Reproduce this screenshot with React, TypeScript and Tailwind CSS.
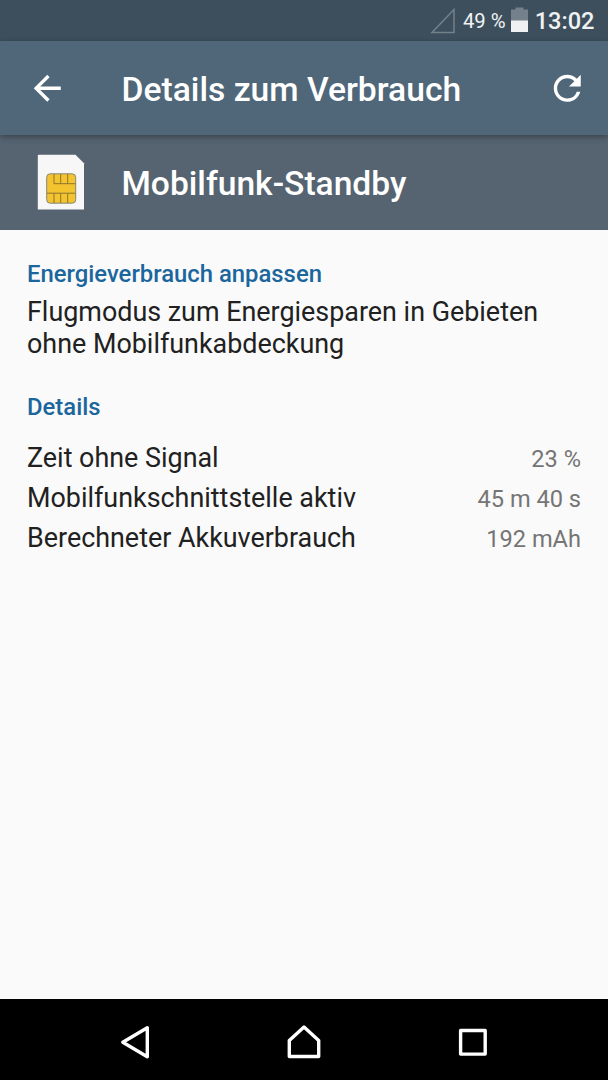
import type { ReactNode } from 'react';

const usageDetails = [
  { label: 'Zeit ohne Signal', value: '23 %' },
  { label: 'Mobilfunkschnittstelle aktiv', value: '45 m 40 s' },
  { label: 'Berechneter Akkuverbrauch', value: '192 mAh' },
];

const StatusBar = () => (
  <div className="flex h-[40.5px] items-center justify-end bg-[#3d4f5d] pr-[13.5px] text-[#f0f2f3]">
    <svg className="mt-[2px] mr-[8px] h-[26px] w-[26px]" viewBox="0 0 26 26" fill="none">
      <path d="M3 24.5H25V1.5Z" stroke="#74808a" strokeWidth="1.5" />
    </svg>
    <span className="pt-[2px] text-[20.3px] leading-none">49 %</span>
    <svg className="mr-[7px] mb-[2px] ml-[5px] h-[25px] w-[17px]" viewBox="0 0 17 25">
      <path d="M4.5 0.5h8v2H17V14H0V2.5h4.5z" fill="#74818a" />
      <path d="M0 13.5h17V25H0z" fill="#eff1f2" />
    </svg>
    <span className="pt-[4px] text-[23.6px] leading-none font-medium">13:02</span>
  </div>
);

const Toolbar = () => (
  <div className="relative z-10 flex h-[94.5px] items-center bg-[#506779] px-[27px] pr-[20.5px] text-white shadow-[0_2px_6px_rgba(0,0,0,0.35)]">
    <svg className="h-[40.5px] w-[40.5px]" viewBox="0 0 24 24" fill="currentColor">
      <path d="M20 11H7.83l5.59-5.59L12 4l-8 8 8 8 1.41-1.41L7.83 13H20v-2z" />
    </svg>
    <h1 className="ml-[54px] flex-1 pt-[4px] text-[33.65px] leading-none font-medium">Details zum Verbrauch</h1>
    <svg className="h-[40.5px] w-[40.5px]" viewBox="0 0 24 24" fill="currentColor">
      <path d="M17.65 6.35A7.958 7.958 0 0 0 12 4c-4.42 0-7.99 3.58-7.99 8s3.57 8 7.99 8c3.73 0 6.84-2.55 7.73-6h-2.08A5.99 5.99 0 0 1 12 18c-3.31 0-6-2.69-6-6s2.69-6 6-6c1.66 0 3.14.69 4.22 1.78L13 11h7V4l-2.35 2.35z" />
    </svg>
  </div>
);

const SimIcon = () => (
  <svg className="h-[56px] w-[48px]" viewBox="0 0 48 56" fill="none">
    <path d="M0.8 1.8Q0.8 0.8 1.8 0.8H38.5L47 9.3V55.5H0.8Z" fill="#f7f7f7" />
    <rect x="9.7" y="19.8" width="29" height="29.4" rx="3.5" fill="#f4c430" stroke="#85877a" strokeWidth="1" />
    <path
      d="M17 20V29.7H38.5M23.7 20V29.7M30.7 20V29.7M10 39.2H38.5M17 39.2V49M23.7 39.2V49M30.7 39.2V49"
      stroke="#8f762b"
      strokeWidth="1"
    />
  </svg>
);

const SectionTitle = ({ children }: { children: ReactNode }) => (
  <h3 className="text-[23.85px] leading-[28px] font-medium text-[#1a669d]">{children}</h3>
);

const NavigationBar = () => (
  <div className="flex h-[81px] items-center bg-black pt-[5px] text-white">
    <div className="flex flex-1 justify-end pr-[51px]">
      <svg className="h-[34px] w-[32px]" viewBox="0 0 32 34" fill="none" stroke="currentColor">
        <path d="M28.3 2.8V31.7L3.8 17.2Z" strokeWidth="3.4" strokeLinejoin="round" />
      </svg>
    </div>
    <div className="flex w-[204px] justify-center">
      <svg className="h-[36px] w-[36px]" viewBox="0 0 36 36" fill="none" stroke="currentColor">
        <path d="M18 3L32.7 16.5V32.5H3.3V16.5Z" strokeWidth="3.4" strokeLinejoin="round" />
      </svg>
    </div>
    <div className="flex flex-1 justify-start pl-[52px]">
      <svg className="h-[30px] w-[30px]" viewBox="0 0 30 30" fill="none" stroke="currentColor">
        <rect x="2.6" y="3.5" width="24.6" height="23.6" strokeWidth="3.4" strokeLinejoin="round" />
      </svg>
    </div>
  </div>
);

const App = () => {
  return (
    <div className="flex h-[1080px] w-[608px] flex-col overflow-hidden bg-[#fafafa] font-['Roboto',sans-serif]">
      <StatusBar />
      <Toolbar />

      <div className="flex h-[94.5px] items-center bg-[#566472] pl-[37px] text-white">
        <SimIcon />
        <h2 className="ml-[36.5px] pt-[4px] text-[33.6px] leading-none font-medium">Mobilfunk-Standby</h2>
      </div>

      <main className="flex-1 px-[27px] pt-[30px] text-[26.9px] text-[#212121]">
        <SectionTitle>Energieverbrauch anpassen</SectionTitle>
        <p className="mt-[8px] leading-[32px]">Flugmodus zum Energiesparen in Gebieten ohne Mobilfunkabdeckung</p>

        <div className="mt-[33px]">
          <SectionTitle>Details</SectionTitle>
        </div>
        <ul className="mt-[17px]">
          {usageDetails.map(item => (
            <li key={item.label} className="flex h-[40px] items-center justify-between leading-[32px]">
              <span>{item.label}</span>
              <span className="pt-[2px] text-[23.6px] text-[#757575]">{item.value}</span>
            </li>
          ))}
        </ul>
      </main>

      <NavigationBar />
    </div>
  );
};

export default App;
